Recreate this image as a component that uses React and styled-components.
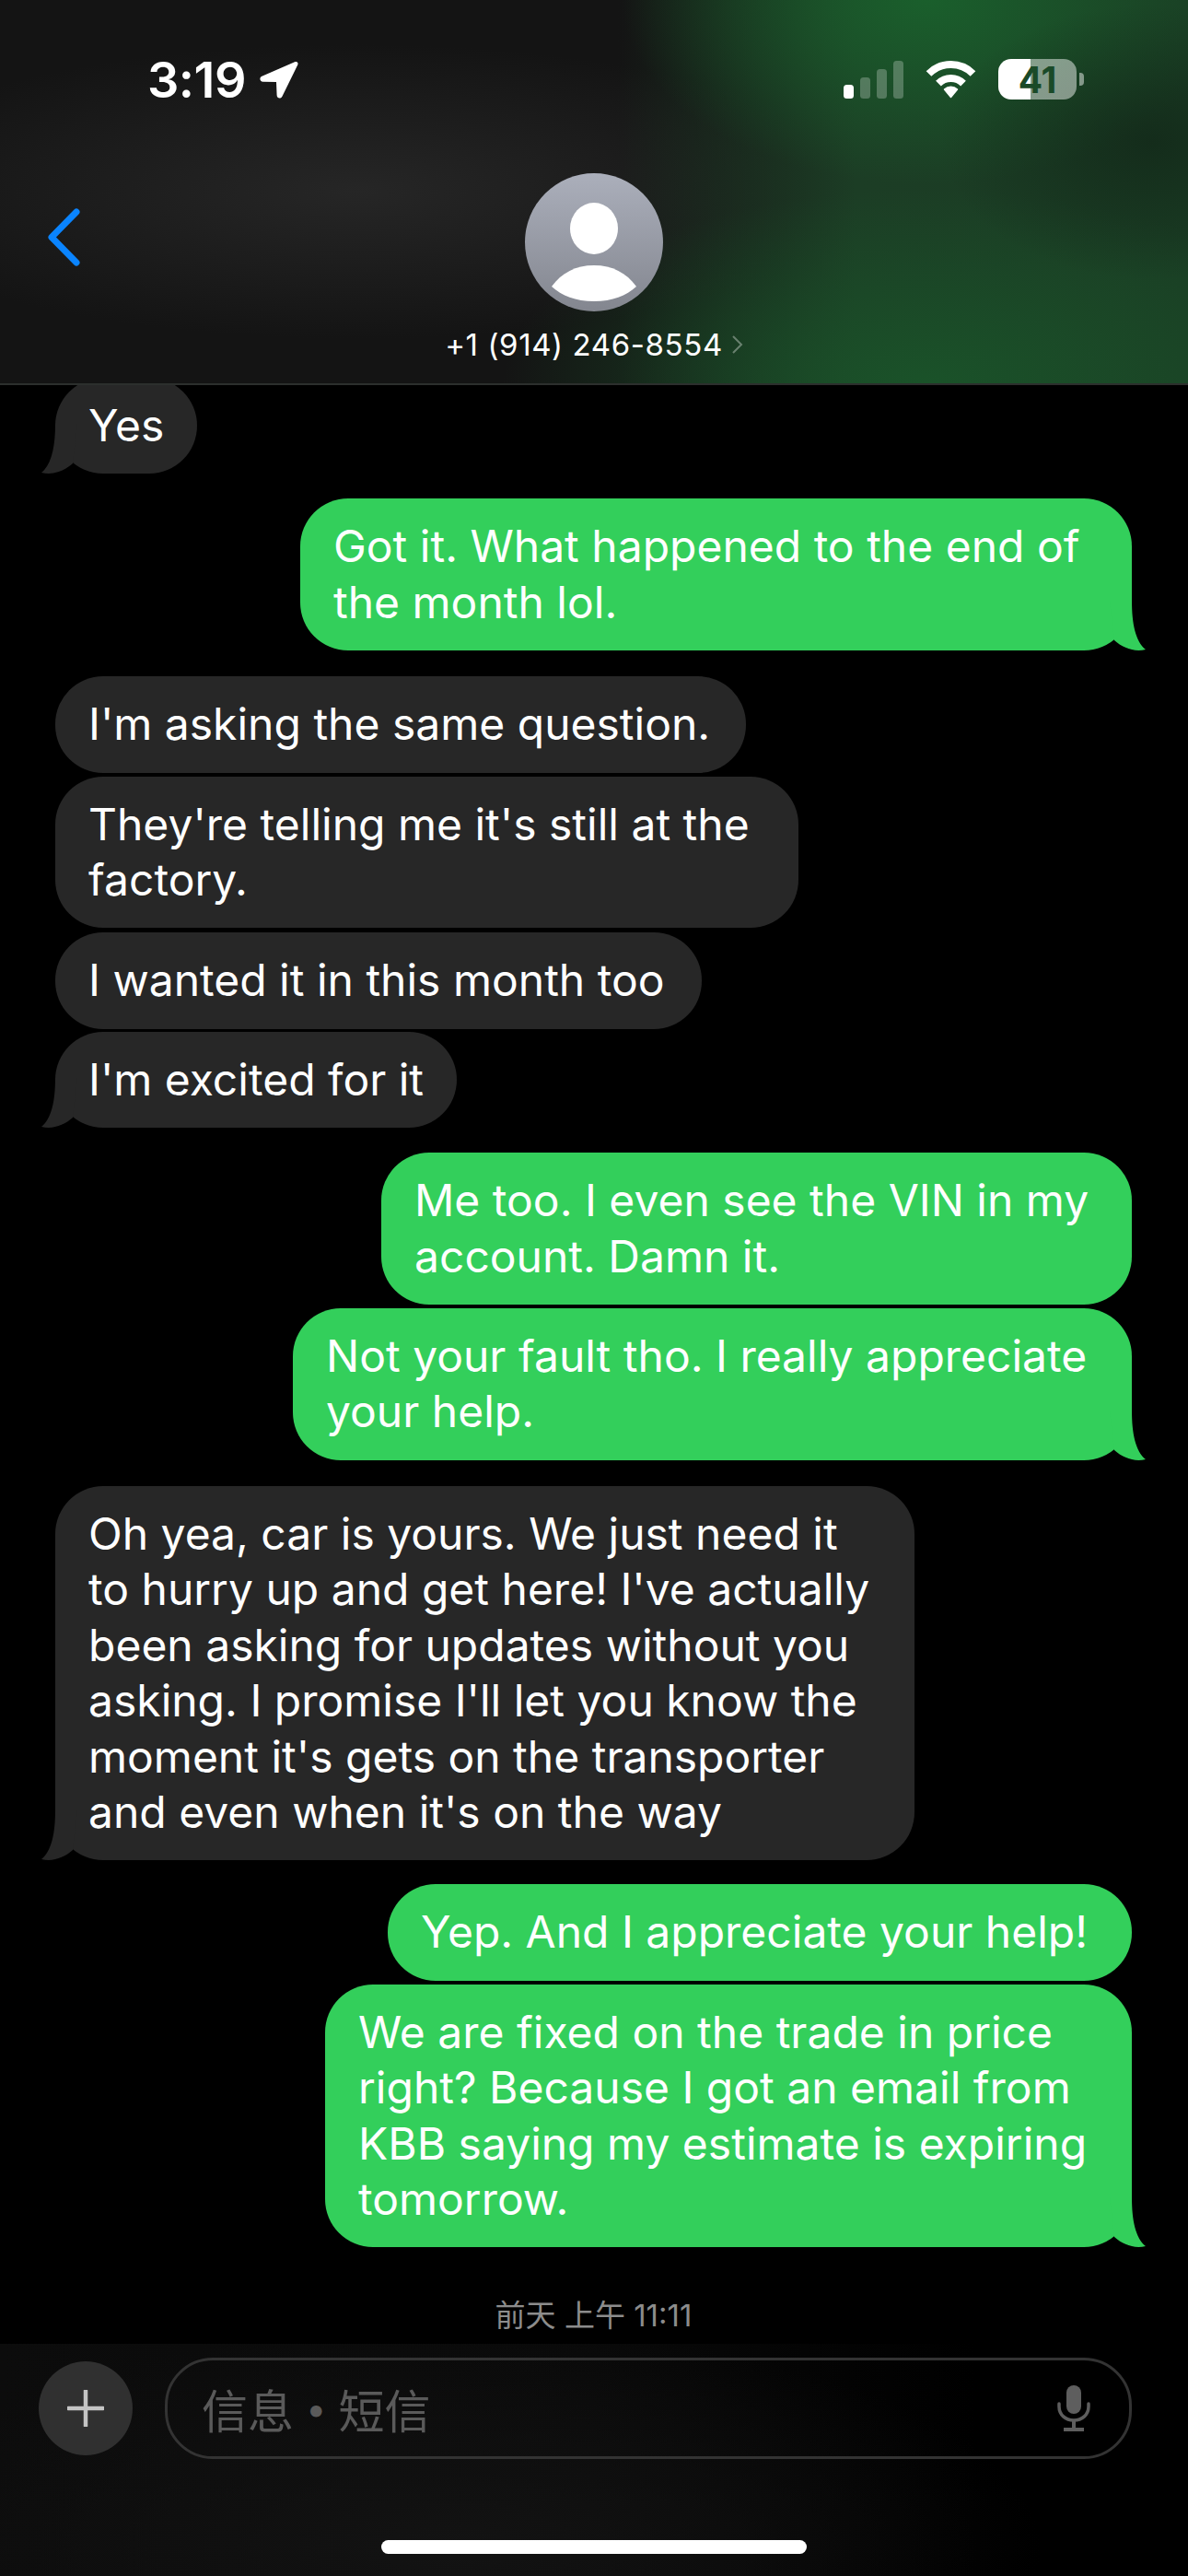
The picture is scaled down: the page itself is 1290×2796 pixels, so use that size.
import React from "react";
import styled, { createGlobalStyle } from "styled-components";

const GlobalStyle = createGlobalStyle`
    html, body {
        margin: 0;
        background: #000;
    }
`;

const messages = [
    { id: 1, from: "them", width: 154, gap: -8, tail: true, lines: ["Yes"] },
    { id: 2, from: "me", width: 903, gap: 27, tail: true, lines: ["Got it. What happened to the end of", "the month lol."] },
    { id: 3, from: "them", width: 750, gap: 28, lines: ["I'm asking the same question."] },
    { id: 4, from: "them", width: 807, gap: 4, lines: ["They're telling me it's still at the", "factory."] },
    { id: 5, from: "them", width: 702, gap: 5, lines: ["I wanted it in this month too"] },
    { id: 6, from: "them", width: 436, gap: 3, tail: true, lines: ["I'm excited for it"] },
    { id: 7, from: "me", width: 815, gap: 27, lines: ["Me too. I even see the VIN in my", "account. Damn it."] },
    { id: 8, from: "me", width: 911, gap: 4, tail: true, lines: ["Not your fault tho. I really appreciate", "your help."] },
    { id: 9, from: "them", width: 933, gap: 28, tail: true, lines: [
        "Oh yea, car is yours. We just need it",
        "to hurry up and get here! I've actually",
        "been asking for updates without you",
        "asking. I promise I'll let you know the",
        "moment it's gets on the transporter",
        "and even when it's on the way",
    ] },
    { id: 10, from: "me", width: 808, gap: 26, lines: ["Yep. And I appreciate your help!"] },
    { id: 11, from: "me", width: 876, gap: 4, tail: true, lines: [
        "We are fixed on the trade in price",
        "right? Because I got an email from",
        "KBB saying my estimate is expiring",
        "tomorrow.",
    ] },
];

export default function App() {
    return (
        <Screen>
            <GlobalStyle />
            <Header>
                <StatusBar>
                    <Clock>
                        3:19
                        <svg width="43" height="41" viewBox="0 0 43 41">
                            <path d="M39 1.2 3.4 16.8C.2 18.3 1 22.6 4.6 22.7L19 23.1 19.6 37.3C19.8 41 24 41.700 25.500 38.500L42.200 4.500C43.300 2 41.500.2 39 1.200Z" fill="#fff" />
                        </svg>
                    </Clock>
                    <Indicators>
                        <Signal>
                            <SignalBar $height={15} $on />
                            <SignalBar $height={23} />
                            <SignalBar $height={32} />
                            <SignalBar $height={41} />
                        </Signal>
                        <svg width="57" height="41" viewBox="0 0 57 41">
                            <g fill="none" stroke="#fff" strokeWidth="8">
                                <path d="M4.500 14A34 34 0 0 1 52.500 14" />
                                <path d="M15 24.600A19 19 0 0 1 42 24.600" />
                            </g>
                            <path d="M21.500 31A10 10 0 0 1 35.500 31L28.500 39.500Z" fill="#fff" stroke="#fff" strokeWidth="1.500" strokeLinejoin="round" />
                        </svg>
                        <Battery>
                            <BatteryBody>41</BatteryBody>
                            <BatteryCap />
                        </Battery>
                    </Indicators>
                </StatusBar>
                <NavRow>
                    <BackButton>
                        <svg width="36" height="63" viewBox="0 0 36 63">
                            <path d="M32 4 5 31.500 32 59" fill="none" stroke="#0a84ff" strokeWidth="7" strokeLinecap="round" strokeLinejoin="round" />
                        </svg>
                    </BackButton>
                    <svg width="150" height="150" viewBox="0 0 150 150">
                        <defs>
                            <linearGradient id="avatarFill" x1="0" y1="0" x2="0" y2="1">
                                <stop offset="0" stopColor="#abafbb" />
                                <stop offset="1" stopColor="#83868f" />
                            </linearGradient>
                        </defs>
                        <circle cx="75" cy="75" r="75" fill="url(#avatarFill)" />
                        <ellipse cx="75" cy="60" rx="26" ry="28" fill="#fff" />
                        <path d="M29 123C40 108 55 100 75 100C95 100 110 108 121 123C110 133 95 139 75 139C55 139 40 133 29 123Z" fill="#fff" />
                    </svg>
                    <Contact>
                        +1 (914) 246-8554
                        <svg width="13" height="20" viewBox="0 0 13 20">
                            <path d="M2 1 11 10 2 19" fill="none" stroke="#fff" strokeOpacity=".35" strokeWidth="2" />
                        </svg>
                    </Contact>
                </NavRow>
            </Header>

            <Thread>
                {messages.map((message) => (
                    <Bubble key={message.id} $mine={message.from === "me"} $width={message.width} $gap={message.gap}>
                        {message.lines.map((line) => (
                            <div key={line}>{line}</div>
                        ))}
                        {message.tail && (
                            <Tail $mine={message.from === "me"} width="68" height="56" viewBox="0 0 68 56">
                                <path d="M16 0C16 25 12 44 1 53C14 56 26 51 35 43L40 0Z" />
                            </Tail>
                        )}
                    </Bubble>
                ))}
                <Timestamp>前天 上午 11:11</Timestamp>
            </Thread>

            <Composer>
                <ComposerRow>
                    <PlusButton>
                        <svg width="40" height="40" viewBox="0 0 40 40">
                            <path d="M20 1V39M1 20H39" stroke="#c4c4c4" strokeWidth="4.500" strokeLinecap="round" />
                        </svg>
                    </PlusButton>
                    <InputField>
                        <Placeholder>信息<PlaceholderDot>•</PlaceholderDot>短信</Placeholder>
                        <svg width="36" height="50" viewBox="0 0 36 50">
                            <rect x="10" y="0" width="16" height="31" rx="8" fill="#5e5e5e" />
                            <path d="M2 20V23C2 32 9 38 18 38C27 38 34 32 34 23V20" fill="none" stroke="#5e5e5e" strokeWidth="3.500" strokeLinecap="round" />
                            <path d="M18 38V47M7 48H29" fill="none" stroke="#5e5e5e" strokeWidth="4" />
                        </svg>
                    </InputField>
                </ComposerRow>
                <HomeIndicator />
            </Composer>
        </Screen>
    );
}

const Screen = styled.div`
    width: 1290px;
    height: 2796px;
    display: flex;
    flex-direction: column;
    overflow: hidden;
    background-color: #000;
    font-family: Inter, "Noto Sans CJK SC", sans-serif;
    color: #fff;
`;

const Header = styled.header`
    position: relative;
    z-index: 1;
    height: 418px;
    box-sizing: border-box;
    flex-shrink: 0;
    border-bottom: 2px solid #2c2f2d;
    background:
        radial-gradient(ellipse 230px 150px at 97% 37%, #10211599, transparent),
        radial-gradient(ellipse 330px 200px at 78% 0%, #1a5f2c, transparent),
        radial-gradient(ellipse 460px 210px at 78% 100%, #1a5229, transparent),
        linear-gradient(90deg, transparent 52%, #1c3d25 72%, #1a3d24),
        radial-gradient(ellipse 560px 160px at 30% 50%, #262626, transparent),
        #141414;
`;

const StatusBar = styled.div`
    height: 188px;
    box-sizing: border-box;
    display: flex;
    align-items: flex-start;
    justify-content: space-between;
    padding: 64px 113px 0 160px;
`;

const Clock = styled.div`
    display: flex;
    align-items: center;
    gap: 14px;
    height: 44px;
    font-size: 54px;
    font-weight: 600;
    letter-spacing: -0.5px;
`;

const Indicators = styled.div`
    display: flex;
    align-items: center;
    gap: 23px;
    height: 44px;
`;

const Signal = styled.div`
    display: flex;
    align-items: flex-end;
    gap: 7px;
    height: 41px;
`;

const SignalBar = styled.span`
    width: 11px;
    height: ${(props) => props.$height}px;
    border-radius: 3.5px;
    background-color: ${(props) => (props.$on ? "#fff" : "rgba(255, 255, 255, 0.25)")};
`;

const Battery = styled.div`
    display: flex;
    align-items: center;
    gap: 3px;
`;

const BatteryBody = styled.div`
    width: 85px;
    height: 44px;
    border-radius: 14px;
    display: flex;
    align-items: center;
    justify-content: center;
    background: linear-gradient(90deg, #fff 41%, rgba(255, 255, 255, 0.47) 41%);
    color: #1a4a28;
    font-size: 39px;
    font-weight: 700;
`;

const BatteryCap = styled.span`
    width: 5px;
    height: 14px;
    border-radius: 0 4px 4px 0;
    background-color: rgba(255, 255, 255, 0.47);
`;

const NavRow = styled.div`
    position: relative;
    display: flex;
    flex-direction: column;
    align-items: center;
`;

const BackButton = styled.div`
    position: absolute;
    left: 51px;
    top: 38px;
    line-height: 0;
`;

const Contact = styled.div`
    display: flex;
    align-items: center;
    gap: 9px;
    margin-top: 16px;
    font-size: 33px;
    line-height: 40px;
    letter-spacing: 0.6px;
`;

const Thread = styled.main`
    flex: 1;
    display: flex;
    flex-direction: column;
    padding: 0 61px 0 60px;
    overflow: hidden;
`;

const Bubble = styled.div`
    position: relative;
    flex-shrink: 0;
    box-sizing: border-box;
    width: ${(props) => props.$width}px;
    margin-top: ${(props) => props.$gap}px;
    padding: 22px 0 22px 36px;
    align-self: ${(props) => (props.$mine ? "flex-end" : "flex-start")};
    border-radius: 52px;
    background-color: ${(props) => (props.$mine ? "#33cf5b" : "#272727")};
    color: #fff;
    font-size: 48px;
    line-height: 60.4px;
    white-space: nowrap;
`;

const Tail = styled.svg`
    position: absolute;
    bottom: -2px;
    ${(props) => (props.$mine ? "right: -16px; transform: scaleX(-1);" : "left: -16px;")}
    fill: ${(props) => (props.$mine ? "#33cf5b" : "#272727")};
`;

const Timestamp = styled.div`
    margin-top: 54px;
    text-align: center;
    font-size: 33px;
    line-height: 40px;
    color: #8c8c8c;
`;

const Composer = styled.footer`
    position: relative;
    height: 252px;
    flex-shrink: 0;
    padding: 15px 61px 0 42px;
    box-sizing: border-box;
    background:
        radial-gradient(ellipse 640px 240px at 38% 88%, #131313, transparent),
        linear-gradient(90deg, #0c0c0c, #090909 50%, #000 82%);
`;

const ComposerRow = styled.div`
    display: flex;
    align-items: center;
    gap: 35px;
`;

const PlusButton = styled.div`
    width: 102px;
    height: 102px;
    flex-shrink: 0;
    border-radius: 50%;
    display: flex;
    align-items: center;
    justify-content: center;
    background-color: #303030;
`;

const InputField = styled.div`
    flex: 1;
    height: 110px;
    box-sizing: border-box;
    display: flex;
    align-items: center;
    justify-content: space-between;
    padding: 0 42px 0 37px;
    border: 3px solid #333;
    border-radius: 52px;
`;

const Placeholder = styled.span`
    display: flex;
    align-items: center;
    font-family: "Noto Sans CJK SC", sans-serif;
    font-size: 50px;
    color: #5a5a5a;
`;

const PlaceholderDot = styled.span`
    margin: 0 13px;
    font-family: Inter, sans-serif;
    font-size: 40px;
`;

const HomeIndicator = styled.div`
    position: absolute;
    left: 414px;
    bottom: 24px;
    width: 462px;
    height: 15px;
    border-radius: 8px;
    background-color: #fff;
`;
